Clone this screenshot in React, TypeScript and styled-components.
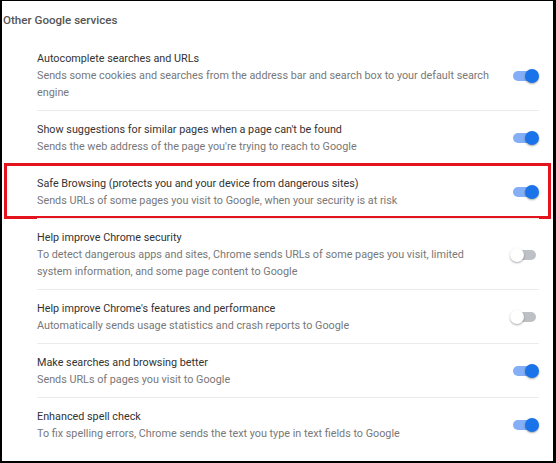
import React from 'react'
import styled, { createGlobalStyle } from 'styled-components'

const GlobalStyle = createGlobalStyle`
  html, body {
    margin: 0;
    padding: 0;
    background: #ffffff;
  }
  body {
    font-family: Roboto, "Noto Sans", "Liberation Sans", sans-serif;
  }
`

const Frame = styled.div`
  box-sizing: border-box;
  width: 556px;
  height: 463px;
  border-style: solid;
  border-color: #000000;
  border-width: 1px 3px 2px 2px;
  background: #ffffff;
  overflow: hidden;
`

const Heading = styled.h2`
  margin: 0;
  padding: 11px 0 0 1px;
  font-size: 11.6px;
  line-height: 17px;
  font-weight: 500;
  color: #555555;
`

const List = styled.div`
  margin: 11px 14px 0 35px;
  display: flex;
  flex-direction: column;
`

const Row = styled.div<{ $highlighted?: boolean }>`
  position: relative;
  display: flex;
  align-items: center;
  padding: 10px 0 9px;
  border-top: 1px solid #ebebeb;

  &:first-child {
    border-top: none;
  }

  ${(p) =>
    p.$highlighted &&
    `
    &::before {
      content: '';
      position: absolute;
      left: -33px;
      right: -12px;
      top: -2px;
      bottom: -1px;
      border: 3px solid #e3141e;
      pointer-events: none;
    }
  `}
`

const Text = styled.div`
  flex: 1;
  min-width: 0;
  margin-right: 17px;
  font-size: 10.8px;
  line-height: 17px;
`

const Title = styled.div`
  color: #333333;
`

const Desc = styled.div`
  color: #787878;
`

const Toggle = styled.div<{ $on: boolean }>`
  position: relative;
  flex: none;
  width: 23px;
  height: 10px;
  margin-right: 3px;
  border-radius: 5px;
  background: ${(p) => (p.$on ? '#84aef5' : '#bdc1c6')};

  &::after {
    content: '';
    position: absolute;
    top: -2px;
    left: ${(p) => (p.$on ? '12px' : '-3px')};
    width: 14px;
    height: 14px;
    border-radius: 50%;
    background: ${(p) => (p.$on ? '#1a73e8' : '#ffffff')};
    box-shadow: 0 1px 2px rgba(0, 0, 0, 0.35);
  }
`

const settings = [
  {
    title: 'Autocomplete searches and URLs',
    desc: 'Sends some cookies and searches from the address bar and search box to your default search engine',
    on: true,
  },
  {
    title: "Show suggestions for similar pages when a page can't be found",
    desc: "Sends the web address of the page you're trying to reach to Google",
    on: true,
  },
  {
    title: 'Safe Browsing (protects you and your device from dangerous sites)',
    desc: 'Sends URLs of some pages you visit to Google, when your security is at risk',
    on: true,
    highlighted: true,
  },
  {
    title: 'Help improve Chrome security',
    desc: 'To detect dangerous apps and sites, Chrome sends URLs of some pages you visit, limited system information, and some page content to Google',
    on: false,
  },
  {
    title: "Help improve Chrome's features and performance",
    desc: 'Automatically sends usage statistics and crash reports to Google',
    on: false,
  },
  {
    title: 'Make searches and browsing better',
    desc: 'Sends URLs of pages you visit to Google',
    on: true,
  },
  {
    title: 'Enhanced spell check',
    desc: 'To fix spelling errors, Chrome sends the text you type in text fields to Google',
    on: true,
  },
]

export default function App() {
  return (
    <>
      <GlobalStyle />
      <Frame>
        <Heading>Other Google services</Heading>
        <List>
          {settings.map((s) => (
            <Row key={s.title} $highlighted={s.highlighted}>
              <Text>
                <Title>{s.title}</Title>
                <Desc>{s.desc}</Desc>
              </Text>
              <Toggle $on={s.on} />
            </Row>
          ))}
        </List>
      </Frame>
    </>
  )
}
